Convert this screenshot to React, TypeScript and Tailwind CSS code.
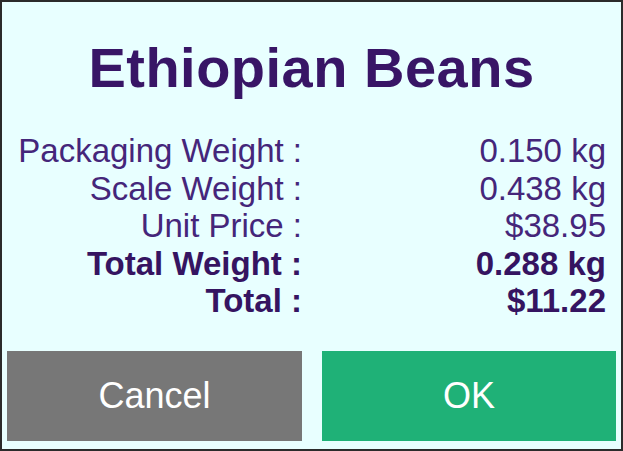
import React from "react";

const rows = [
  { label: "Packaging Weight :", value: "0.150 kg", bold: false },
  { label: "Scale Weight :", value: "0.438 kg", bold: false },
  { label: "Unit Price :", value: "$38.95", bold: false },
  { label: "Total Weight :", value: "0.288 kg", bold: true },
  { label: "Total :", value: "$11.22", bold: true },
];

export default function App() {
  return (
    <div
      className="w-[623px] h-[451px] border-2 border-[#2b2b2b] bg-[#e8ffff] flex flex-col"
      style={{ fontFamily: '"Liberation Sans", Arial, sans-serif' }}
    >
      <h1 className="mt-[38px] text-center text-[56px] font-bold text-[#381566] leading-[56px] tracking-[0.5px]">
        Ethiopian Beans
      </h1>
      <div className="flex flex-col mt-[36px]">
        {rows.map((r) => (
          <div
            key={r.label}
            className={`grid grid-cols-[300px_1fr] text-[33px] leading-[37.5px] ${r.bold ? "font-bold text-[#351461]" : "text-[#45267a]"}`}
          >
            <span className="text-right whitespace-nowrap">{r.label}</span>
            <span className="text-right pr-[15px] whitespace-nowrap">{r.value}</span>
          </div>
        ))}
      </div>
      <div className="flex-1" />
      <div className="flex gap-[20px] px-[5px] pb-[8px]">
        <button className="w-[295px] h-[90px] bg-[#777777] text-white text-[36px] flex items-center justify-center">
          Cancel
        </button>
        <button className="flex-1 h-[90px] bg-[#1fb177] text-white text-[36px] flex items-center justify-center">
          OK
        </button>
      </div>
    </div>
  );
}
